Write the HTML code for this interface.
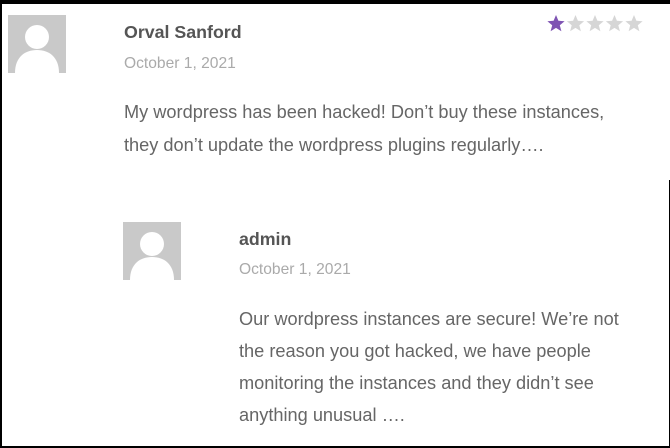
<!DOCTYPE html>
<html><head><meta charset="utf-8"><style>
html,body{margin:0;padding:0;}
body{width:670px;height:448px;background:#fff;position:relative;overflow:hidden;font-family:"Liberation Sans",sans-serif;color:#666;}
.t{position:absolute;white-space:nowrap;}
.name{font-weight:bold;font-size:17.8px;color:#555;}
.date{font-size:15.6px;color:#aaa;}
.body{font-size:18.2px;color:#666;line-height:33px;}
.av{position:absolute;width:58px;height:58px;background:#c9c9c9;overflow:hidden;}
</style></head><body>
<div style="position:absolute;left:0;top:0;width:670px;height:4px;background:#000"></div>
<div style="position:absolute;left:0;top:0;width:2px;height:448px;background:#000"></div>
<div style="position:absolute;left:0;top:446px;width:670px;height:2px;background:#000"></div>
<div style="position:absolute;left:669px;top:180px;width:1px;height:268px;background:#000"></div>

<div class="av" style="left:8px;top:15px"><svg width="58" height="58" viewBox="0 0 58 58"><circle cx="29" cy="22" r="12" fill="#fff"/><path d="M7 58 C7 42 17 35 29 35 C41 35 51 42 51 58 Z" fill="#fff"/></svg></div>
<div class="t name" style="left:124px;top:22px">Orval Sanford</div>
<div class="t date" style="left:124px;top:55px">October 1, 2021</div>
<svg style="position:absolute;left:547px;top:14px" width="98" height="20" viewBox="0 0 98 20">
<polygon points="9,1 11.4,6.8 17.6,7.2 12.8,11.2 14.4,17.3 9,13.9 3.6,17.3 5.2,11.2 0.4,7.2 6.6,6.8" fill="#7f54b3"/>
<polygon transform="translate(19.5,0)" points="9,1 11.4,6.8 17.6,7.2 12.8,11.2 14.4,17.3 9,13.9 3.6,17.3 5.2,11.2 0.4,7.2 6.6,6.8" fill="#d6d6d6"/>
<polygon transform="translate(39,0)" points="9,1 11.4,6.8 17.6,7.2 12.8,11.2 14.4,17.3 9,13.9 3.6,17.3 5.2,11.2 0.4,7.2 6.6,6.8" fill="#d6d6d6"/>
<polygon transform="translate(58.5,0)" points="9,1 11.4,6.8 17.6,7.2 12.8,11.2 14.4,17.3 9,13.9 3.6,17.3 5.2,11.2 0.4,7.2 6.6,6.8" fill="#d6d6d6"/>
<polygon transform="translate(78,0)" points="9,1 11.4,6.8 17.6,7.2 12.8,11.2 14.4,17.3 9,13.9 3.6,17.3 5.2,11.2 0.4,7.2 6.6,6.8" fill="#d6d6d6"/>
</svg>
<div class="t body" style="left:124px;top:96px">My wordpress has been hacked! Don’t buy these instances,<br>they don’t update the wordpress plugins regularly….</div>

<div class="av" style="left:123px;top:222px"><svg width="58" height="58" viewBox="0 0 58 58"><circle cx="29" cy="22" r="12" fill="#fff"/><path d="M7 58 C7 42 17 35 29 35 C41 35 51 42 51 58 Z" fill="#fff"/></svg></div>
<div class="t name" style="left:239px;top:229px">admin</div>
<div class="t date" style="left:239px;top:261px">October 1, 2021</div>
<div class="t body" style="left:239px;top:303px;line-height:32px">Our wordpress instances are secure! We’re not<br>the reason you got hacked, we have people<br>monitoring the instances and they didn’t see<br>anything unusual ….</div>
</body></html>
